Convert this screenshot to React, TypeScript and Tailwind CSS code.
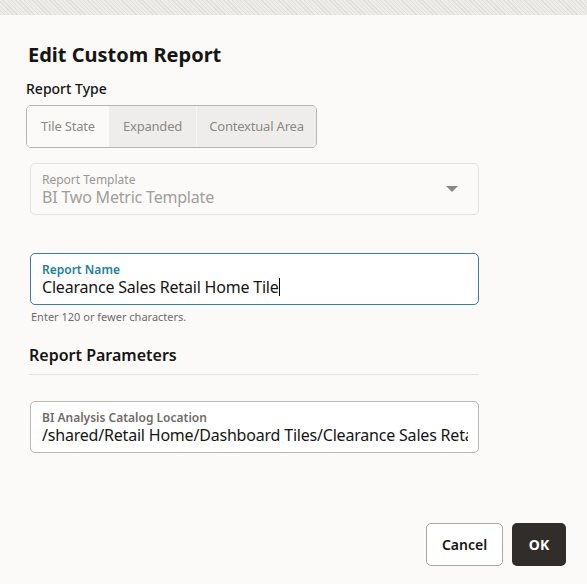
import React from 'react';

const font = { fontFamily: '"Noto Sans", "Open Sans", Arial, sans-serif' };

const Field: React.FC<{
  label: string;
  value: string;
  variant: 'disabled' | 'focused' | 'normal';
  caret?: boolean;
  className?: string;
}> = ({ label, value, variant, caret, className }) => {
  const box =
    variant === 'disabled'
      ? 'border-[#e4e2df] bg-[#fbfaf9]'
      : variant === 'focused'
      ? 'border-[#3f7f8f] bg-white'
      : 'border-[#b9b7b4] bg-white';
  const labelColor =
    variant === 'focused' ? 'text-[#23809c] font-semibold' : variant === 'disabled' ? 'text-[#9a9794]' : 'text-[#6f6c69] font-semibold';
  const valueColor = variant === 'disabled' ? 'text-[#a19e9b]' : 'text-[#161513]';
  return (
    <div className={`relative ml-[4px] w-[449px] h-[52px] rounded-[5px] border pl-[11px] pr-[10px] pt-[9px] ${box} ${className ?? ''}`}>
      <div className={`text-[12px] leading-[14px] ${labelColor}`}>{label}</div>
      <div className={`text-[16px] leading-[20px] tracking-[-0.2px] whitespace-nowrap overflow-hidden ${valueColor}`}>
        {value}
        {caret && <span className="inline-block w-px h-[18px] bg-black align-[-3px]" />}
      </div>
      {variant === 'disabled' && (
        <svg className="absolute right-[20px] top-[22px]" width="12" height="7" viewBox="0 0 12 7">
          <path d="M0 0 L12 0 L6 6 Z" fill="#8a8784" />
        </svg>
      )}
    </div>
  );
};

export default function App() {
  return (
    <div className="w-[587px] h-[584px] bg-[#fbfaf9] overflow-hidden" style={font}>
      <div className="h-[15px] bg-[repeating-linear-gradient(45deg,#e2e0dd_0px,#e2e0dd_1px,#eeece9_1px,#eeece9_3px)]" />
      <div className="pl-[26px]">
        <h1 className="mt-[28px] ml-[2px] text-[20px] leading-[24px] font-bold text-[#161513]">Edit Custom Report</h1>
        <div className="mt-[12px] text-[14px] leading-[20px] font-medium text-[#161513]">Report Type</div>

        <div className="mt-[6px] flex w-[291px] h-[43px] rounded-[5px] border border-[#b7b5b2] overflow-hidden text-[13px] tracking-[-0.2px] text-[#8c8985]">
          <div className="w-[82px] flex items-center justify-center bg-[#fbfaf9]">Tile State</div>
          <div className="w-[87px] flex items-center justify-center bg-[#efedeb]">Expanded</div>
          <div className="flex-1 flex items-center justify-center bg-[#efedeb] border-l border-[#f7f6f5]">Contextual Area</div>
        </div>

        <Field className="mt-[15px]" label="Report Template" value="BI Two Metric Template" variant="disabled" />
        <Field className="mt-[38px]" label="Report Name" value="Clearance Sales Retail Home Tile" variant="focused" caret />
        <div className="mt-[5px] ml-[5px] text-[11px] leading-[14px] text-[#6f6c69]">Enter 120 or fewer characters.</div>

        <div className="mt-[20px] ml-[3px] text-[16px] leading-[22px] font-semibold text-[#161513]">Report Parameters</div>
        <div className="mt-[8px] ml-[3px] w-[450px] border-t border-[#e4e2df]" />

        <Field
          className="mt-[26px]"
          label="BI Analysis Catalog Location"
          value="/shared/Retail Home/Dashboard Tiles/Clearance Sales Retail Home Tile"
          variant="normal"
        />
      </div>

      <div className="mt-[70px] pr-[21px] flex justify-end gap-[9px]">
        <button className="w-[77px] h-[43px] rounded-[5px] border border-[#a9a7a4] bg-white text-[14px] font-semibold text-[#161513]">
          Cancel
        </button>
        <button className="w-[54px] h-[43px] rounded-[5px] bg-[#312d2a] text-[14px] font-bold text-white">OK</button>
      </div>
    </div>
  );
}
